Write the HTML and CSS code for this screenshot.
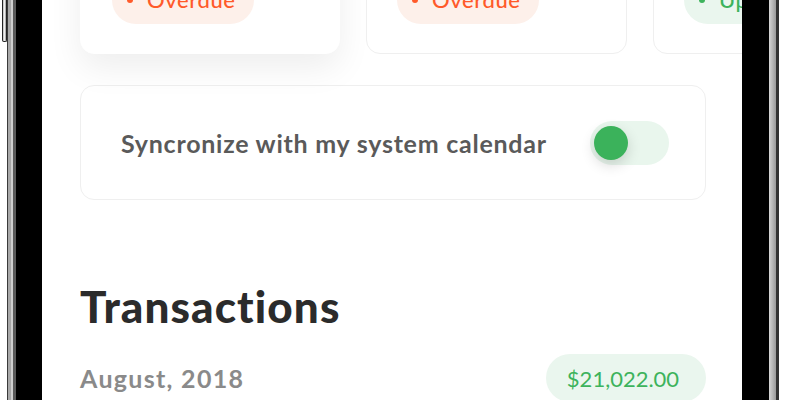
FILE: index.html
```html
<!DOCTYPE html>
<html>
<head>
<meta charset="utf-8">
<link rel="stylesheet" href="styles.css">
</head>
<body>
<div class="phone">
  <div class="side-left"><div class="vol-btn"></div></div>
  <div class="bezel-left"></div>
  <div class="screen">
    <div class="cards">
      <div class="card raised">
        <span class="badge overdue"><span class="dot"></span>Overdue</span>
      </div>
      <div class="card">
        <span class="badge overdue"><span class="dot"></span>Overdue</span>
      </div>
      <div class="card">
        <span class="badge upcoming"><span class="dot"></span>Upcoming</span>
      </div>
    </div>
    <div class="sync">
      <span class="sync-label">Syncronize with my system calendar</span>
      <div class="toggle"><div class="knob"></div></div>
    </div>
    <h1 class="title">Transactions</h1>
    <div class="month-row">
      <span class="month">August, 2018</span>
      <span class="amount">$21,022.00</span>
    </div>
  </div>
  <div class="bezel-right"></div>
  <div class="side-right"></div>
</div>
</body>
</html>
```
FILE: styles.css
```css
html, body {
  margin: 0;
  padding: 0;
  background: #fff;
}
body {
  width: 786px;
  height: 400px;
  overflow: hidden;
  font-family: Lato, "Open Sans", sans-serif;
}
.phone {
  display: flex;
  height: 400px;
}
.side-left {
  width: 7px;
  flex: none;
  padding-left: 2px;
  box-sizing: border-box;
}
.vol-btn {
  width: 5px;
  height: 42px;
  box-sizing: border-box;
  border: 1px solid #222;
  border-top: none;
  border-radius: 0 0 2px 2px;
  background: linear-gradient(to right, #bbb, #eee 50%, #999);
}
.bezel-left {
  width: 35px;
  flex: none;
  background: linear-gradient(to right,
    #3a3a3a 0, #3a3a3a 1px,
    #a8a8a8 1px, #a8a8a8 4px,
    #d0d0d0 4px, #d0d0d0 6px,
    #5a5a5a 6px, #5a5a5a 9px,
    #000 9px, #000 100%);
}
.screen {
  width: 700px;
  flex: none;
  height: 400px;
  overflow: hidden;
  box-sizing: border-box;
  padding-left: 38px;
  background: #fff;
}
.cards {
  display: flex;
  gap: 26px;
  margin-top: -96px;
}
.card {
  width: 261px;
  height: 150px;
  flex: none;
  box-sizing: border-box;
  border: 1.5px solid #efefef;
  border-radius: 14px;
  background: #fff;
  display: flex;
  align-items: flex-end;
  padding: 0 30px 29px;
}
.card.raised {
  width: 260px;
  border-color: #fff;
  padding-left: 31px;
  box-shadow: 0 14px 34px rgba(0, 0, 0, 0.07);
}
.badge {
  display: inline-flex;
  align-items: center;
  height: 48px;
  box-sizing: border-box;
  border-radius: 24px;
  padding: 0 18px 1px 15px;
  font-size: 22px;
  letter-spacing: 0.6px;
  font-weight: 500;
  white-space: nowrap;
}
.badge .dot {
  width: 6px;
  height: 6px;
  border-radius: 50%;
  margin-right: 14px;
  background: currentColor;
}
.overdue {
  background: #fdf0ea;
  color: #ff5a2a;
}
.upcoming {
  background: #eaf6ee;
  color: #3db35c;
}
.sync {
  width: 626px;
  height: 115px;
  margin-top: 31px;
  box-sizing: border-box;
  border: 1.5px solid #efefef;
  border-radius: 14px;
  display: flex;
  align-items: center;
  justify-content: space-between;
  padding: 0 36px 0 40px;
}
.sync-label {
  font-size: 25px;
  letter-spacing: 0.75px;
  font-weight: 700;
  color: #5a5a5a;
}
.toggle {
  width: 79px;
  height: 44px;
  border-radius: 22px;
  background: #e9f6ed;
  display: flex;
  align-items: center;
  padding-left: 4px;
  box-sizing: border-box;
}
.knob {
  width: 34px;
  height: 34px;
  border-radius: 50%;
  background: #3bb25b;
  box-shadow: 0 5px 14px rgba(0, 0, 0, 0.16);
}
.title {
  margin: 80px 0 0;
  font-size: 44px;
  letter-spacing: 1.1px;
  line-height: 52px;
  font-weight: 900;
  color: #2b2b2b;
}
.month-row {
  width: 626px;
  margin-top: 22px;
  display: flex;
  align-items: center;
  justify-content: space-between;
}
.month {
  font-size: 25px;
  letter-spacing: 1.3px;
  font-weight: 700;
  color: #8a8a8a;
}
.amount {
  width: 160px;
  height: 48px;
  box-sizing: border-box;
  border-radius: 24px;
  padding-right: 6px;
  background: #eaf6ee;
  color: #3db35c;
  font-size: 22px;
  display: flex;
  align-items: center;
  justify-content: center;
}
.bezel-right {
  width: 27px;
  flex: none;
  background: #000;
}
.side-right {
  width: 10px;
  flex: none;
  background: linear-gradient(to right,
    #d6d6d6 0, #9a9a9a 7px,
    #333 7px, #333 10px);
}
```
